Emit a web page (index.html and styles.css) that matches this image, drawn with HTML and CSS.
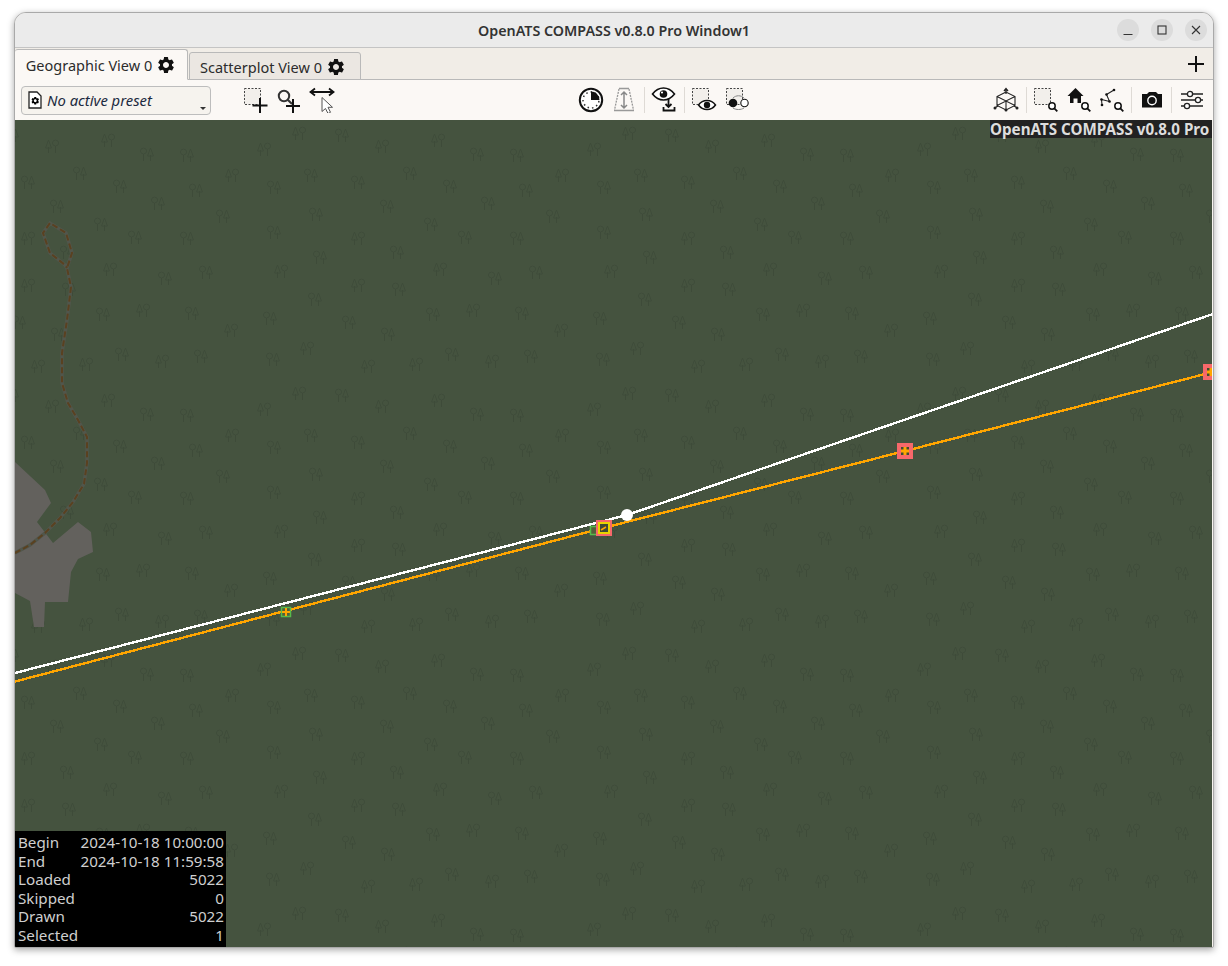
FILE: index.html
```html
<!DOCTYPE html>
<html lang="en">
<head>
  <meta charset="UTF-8">
  <title>OpenATS COMPASS v0.8.0 Pro Window1</title>
  <link rel="stylesheet" href="styles.css">
</head>
<body>
  <svg class="defs" width="0" height="0">
    <defs>
      <symbol id="gear" viewBox="0 0 24 24">
        <path d="M19.14 12.94c.04-.3.06-.61.06-.94 0-.32-.02-.64-.07-.94l2.03-1.58a.49.49 0 0 0 .12-.61l-1.92-3.32a.488.488 0 0 0-.59-.22l-2.39.96c-.5-.38-1.03-.7-1.62-.94l-.36-2.54a.484.484 0 0 0-.48-.41h-3.84c-.24 0-.43.17-.47.41l-.36 2.54c-.59.24-1.13.57-1.62.94l-2.39-.96c-.22-.08-.47 0-.59.22L2.74 8.87c-.12.21-.08.47.12.61l2.03 1.58c-.05.3-.09.63-.09.94s.02.64.07.94l-2.03 1.58a.49.49 0 0 0-.12.61l1.92 3.32c.12.22.37.29.59.22l2.39-.96c.5.38 1.03.7 1.62.94l.36 2.54c.05.24.24.41.48.41h3.84c.24 0 .44-.17.47-.41l.36-2.54c.59-.24 1.13-.56 1.62-.94l2.39.96c.22.08.47 0 .59-.22l1.92-3.32c.12-.22.07-.47-.12-.61l-2.01-1.58zM12 15.6c-1.98 0-3.6-1.62-3.6-3.6s1.62-3.6 3.6-3.6 3.6 1.62 3.6 3.6-1.62 3.6-3.6 3.6z"/>
      </symbol>
      <symbol id="mag" viewBox="0 0 10 10" overflow="visible">
        <circle cx="4" cy="4" r="3.2" fill="#fff" stroke="#111" stroke-width="1.5"/>
        <path d="M6.3 6.3 9.3 9.3" stroke="#111" stroke-width="1.8"/>
      </symbol>
      <g id="tree-a">
        <circle cx="3.5" cy="4" r="3"/>
        <path d="M3.5 7V14M10.5 8V14M10.5 1 7.5 9H13.500Z"/>
      </g>
      <g id="tree-b">
        <circle cx="10.5" cy="4" r="3"/>
        <path d="M10.5 7V14M3.5 8V14M3.5 1 .5 9H6.5Z"/>
      </g>
      <pattern id="forest" width="330" height="260" patternUnits="userSpaceOnUse" patternTransform="translate(225 5)">
        <g class="trees">
          <use href="#tree-b" x="52" y="1"/><use href="#tree-a" x="95" y="3"/><use href="#tree-b" x="135" y="14"/>
          <use href="#tree-b" x="191" y="8"/><use href="#tree-a" x="230" y="22"/><use href="#tree-a" x="270" y="23"/>
          <use href="#tree-b" x="17" y="17"/><use href="#tree-a" x="64" y="43"/><use href="#tree-a" x="111" y="50"/>
          <use href="#tree-a" x="163" y="41"/><use href="#tree-a" x="27" y="55"/><use href="#tree-a" x="203" y="54"/>
          <use href="#tree-a" x="279" y="58"/><use href="#tree-b" x="315" y="43"/><use href="#tree-a" x="69" y="82"/>
          <use href="#tree-a" x="140" y="74"/><use href="#tree-a" x="241" y="71"/><use href="#tree-a" x="306" y="84"/>
          <use href="#tree-a" x="27" y="100"/><use href="#tree-b" x="111" y="106"/><use href="#tree-a" x="184" y="92"/>
          <use href="#tree-a" x="218" y="105"/><use href="#tree-a" x="270" y="106"/><use href="#tree-a" x="73" y="125"/>
          <use href="#tree-a" x="150" y="120"/><use href="#tree-b" x="34" y="139"/><use href="#tree-b" x="193" y="137"/>
          <use href="#tree-a" x="248" y="146"/><use href="#tree-a" x="289" y="140"/><use href="#tree-b" x="111" y="153"/>
          <use href="#tree-a" x="152" y="157"/><use href="#tree-a" x="68" y="167"/><use href="#tree-a" x="23" y="186"/>
          <use href="#tree-a" x="102" y="190"/><use href="#tree-a" x="186" y="182"/><use href="#tree-b" x="226" y="178"/>
          <use href="#tree-a" x="275" y="181"/><use href="#tree-b" x="314" y="198"/><use href="#tree-a" x="141" y="202"/>
          <use href="#tree-b" x="60" y="216"/><use href="#tree-a" x="26" y="227"/><use href="#tree-a" x="205" y="222"/>
          <use href="#tree-a" x="284" y="224"/><use href="#tree-b" x="245" y="229"/><use href="#tree-b" x="169" y="232"/>
          <use href="#tree-b" x="121" y="234"/>
        </g>
      </pattern>
    </defs>
  </svg>

  <div class="window">
    <header class="titlebar">
      <span class="title">OpenATS COMPASS v0.8.0 Pro Window1</span>
      <div class="winbtns">
        <span class="winbtn"><svg width="12" height="12" viewBox="0 0 12 12"><path d="M1.5 10.5h9" stroke="#333" stroke-width="1.2"/></svg></span>
        <span class="winbtn"><svg width="12" height="12" viewBox="0 0 12 12"><rect x="2" y="2" width="8" height="8" fill="none" stroke="#333" stroke-width="1.1"/></svg></span>
        <span class="winbtn"><svg width="12" height="12" viewBox="0 0 12 12"><path d="M2 2l8 8M10 2l-8 8" stroke="#333" stroke-width="1.1"/></svg></span>
      </div>
    </header>

    <nav class="tabbar">
      <div class="tab active">Geographic View 0 <svg class="gear" width="20" height="20"><use href="#gear"/></svg></div>
      <div class="tab">Scatterplot View 0 <svg class="gear" width="20" height="20"><use href="#gear"/></svg></div>
      <svg class="addtab" width="16" height="16" viewBox="0 0 16 16"><path d="M8 0v16M0 8h16" stroke="#111" stroke-width="2"/></svg>
    </nav>

    <div class="toolbar">
      <div class="combo">
        <svg width="16" height="18" viewBox="0 0 16 18">
          <path d="M2 1h8l4 4v12H2z" fill="#fff" stroke="#222" stroke-width="1.3"/>
          <use href="#gear" x="3.5" y="5" width="9.5" height="9.5"/>
        </svg>
        <span class="combo-text">No active preset</span>
        <span class="combo-arrow"></span>
      </div>

      <div class="tools left-tools">
        <svg class="icon" viewBox="0 0 26 26">
          <rect x=".5" y="1.5" width="16" height="16" fill="#f2efeb" stroke="#444" stroke-dasharray="2 1.5"/>
          <path d="M16 11v15M8.5 18.5h15" stroke="#111" stroke-width="2"/>
        </svg>
        <svg class="icon" viewBox="0 0 26 26">
          <circle cx="7" cy="9" r="5.2" fill="none" stroke="#333" stroke-width="2"/>
          <path d="M11 13l4 4" stroke="#333" stroke-width="2.2"/>
          <path d="M16 12v14M9 19h14" stroke="#111" stroke-width="2"/>
        </svg>
        <svg class="icon" viewBox="0 0 26 26">
          <path d="M2 5h22M6 1.5 1.500 5 6 8.500M20 1.500 24.500 5 20 8.500" fill="none" stroke="#111" stroke-width="1.8"/>
          <path d="M13 10.5v14l3.5-3 2.5 5 2.5-1.2-2.500-5h4.500z" fill="#fff" stroke="#555"/>
        </svg>
      </div>

      <span class="spacer"></span>

      <div class="tools">
        <svg class="icon" viewBox="0 0 26 26">
          <circle cx="13" cy="13" r="11.2" fill="#fff" stroke="#111" stroke-width="2"/>
          <circle cx="13" cy="13" r="8" fill="none" stroke="#333" stroke-width="1.5" stroke-dasharray="1.5 3" stroke-dashoffset="-1"/>
          <path d="M13 4.5V13h8.5A8.5 8.5 0 0 0 13 4.5z" fill="#111"/>
        </svg>
        <svg class="icon" viewBox="0 0 26 26">
          <path d="M8 2 3.5 23M18 2l4.5 21" fill="none" stroke="#999" stroke-width="1.3" stroke-dasharray="2 1"/>
          <path d="M8 1.5h10M3 23.5h20" stroke="#999" stroke-width="1.5"/>
          <path d="M13 5v16M10 8l3-3 3 3M10 18l3 3 3-3" fill="none" stroke="#888" stroke-width="1.5"/>
        </svg>
        <span class="sep"></span>
        <svg class="icon" viewBox="0 0 26 26">
          <path d="M1.5 7C5 2.5 9 1 12.5 1S20 2.5 23.5 7C20 11.5 16 13 12.5 13S5 11.5 1.5 7z" fill="#fff" stroke="#111" stroke-width="1.6"/>
          <circle cx="12.5" cy="7" r="3.8" fill="#111"/>
          <circle cx="11" cy="5.5" r="1.1" fill="#fff"/>
          <path d="M17.5 12v8M14.5 17l3 3 3-3" fill="none" stroke="#111" stroke-width="1.8"/>
          <path d="M12.5 20v3.5h11V20" fill="none" stroke="#111" stroke-width="1.8"/>
        </svg>
        <span class="sep"></span>
        <svg class="icon" viewBox="0 0 26 26">
          <rect x="1.5" y="1.5" width="16" height="16" fill="#f2efeb" stroke="#444" stroke-dasharray="2 1.5"/>
          <path d="M7.5 18C10 14.5 13 13.5 16 13.5S22 14.5 24.5 18C22 21.5 19 22.5 16 22.5S10 21.5 7.5 18z" fill="#fff" stroke="#111" stroke-width="1.5"/>
          <circle cx="16" cy="18" r="3.2" fill="#111"/>
        </svg>
        <svg class="icon" viewBox="0 0 26 26">
          <rect x="2.5" y="1.5" width="16" height="16" fill="#f2efeb" stroke="#444" stroke-dasharray="2 1.5"/>
          <path d="M9 11c3-3 8-3 11 0M9 21c3 2 8 2 11 0" fill="none" stroke="#888"/>
          <circle cx="9" cy="16" r="4.3" fill="#111"/>
          <circle cx="20.5" cy="16" r="3.7" fill="#fff" stroke="#111" stroke-width="1.1"/>
        </svg>
      </div>

      <span class="spacer"></span>

      <div class="tools">
        <svg class="icon" viewBox="0 0 26 26">
          <path d="M13 5 4 9.5v9L13 23l9-4.5v-9zM4 9.5 13 14l9-4.5M13 14v9M4 18.5 13 14l9 4.5" fill="none" stroke="#222" stroke-width="1.1"/>
          <path d="M13 2v5M11 4l2-2.5L15 4M1.5 21 5 19M21 19l3.5 2" fill="none" stroke="#222" stroke-width="1.3"/>
          <circle cx="2" cy="21" r="1.5" fill="#222"/><circle cx="24" cy="21" r="1.5" fill="#222"/><circle cx="13" cy="23" r="1.5" fill="#222"/>
        </svg>
        <span class="sep"></span>
        <svg class="icon" viewBox="0 0 26 26">
          <rect x="1.5" y="1.5" width="16" height="16" fill="#f2efeb" stroke="#444" stroke-dasharray="2 1.5"/>
          <use href="#mag" x="15" y="15" width="10" height="10"/>
        </svg>
        <svg class="icon" viewBox="0 0 26 26">
          <path d="M9.5 1 1.5 9H4v7h3.5v-4.5h4V16H15V9h2.5z" fill="#111"/>
          <use href="#mag" x="15" y="15" width="10" height="10"/>
        </svg>
        <svg class="icon" viewBox="0 0 26 26">
          <path d="M3 18l-.5-5.5 8 2-3-7L15 3" fill="none" stroke="#222" stroke-width="1.1"/>
          <circle cx="3" cy="18" r="1.3" fill="#111"/><circle cx="2.5" cy="12.5" r="1.3" fill="#111"/>
          <circle cx="10.5" cy="14.5" r="1.3" fill="#111"/><circle cx="7.5" cy="7.5" r="1.3" fill="#111"/><circle cx="15" cy="3" r="1.3" fill="#111"/>
          <use href="#mag" x="15" y="15" width="10" height="10"/>
        </svg>
        <span class="sep"></span>
        <svg class="icon" viewBox="0 0 26 26">
          <path d="M3 7h5l2-2h7l2 2h4v13.5H3z" fill="#111"/>
          <circle cx="13" cy="13.5" r="4.2" fill="#111" stroke="#fff" stroke-width="1.4"/>
        </svg>
        <span class="sep"></span>
        <svg class="icon" viewBox="0 0 26 26">
          <path d="M2 7h22M2 13h22M2 19h22" stroke="#222" stroke-width="1.3"/>
          <circle cx="11" cy="7" r="2.6" fill="#fff" stroke="#222" stroke-width="1.3"/>
          <circle cx="19" cy="13" r="2.6" fill="#fff" stroke="#222" stroke-width="1.3"/>
          <circle cx="8" cy="19" r="2.6" fill="#fff" stroke="#222" stroke-width="1.3"/>
        </svg>
      </div>
    </div>

    <main class="map">
      <svg class="map-canvas" width="1198" height="827" viewBox="0 0 1198 827">
        <rect width="1198" height="827" fill="url(#forest)"/>
        <path class="land" d="M0 342 30 370 36 383 22 402 38 423 63 402 76 412 78 432 63 439 56 452 53 482 30 482 29 507 19 507 15 481 0 473Z"/>
        <path class="track-halo" d="M0 433 15 425 30 413 45 398 58 382 69 364 72 343 72 317 63 300 53 283 47 263 47 233 52 200 56 167 52 148 57 133 51 113 35 103 28 113 35 133 50 145 52 148"/>
        <path class="track" d="M0 433 15 425 30 413 45 398 58 382 69 364 72 343 72 317 63 300 53 283 47 263 47 233 52 200 56 167 52 148 57 133 51 113 35 103 28 113 35 133 50 145 52 148"/>
        <path class="line-white" d="M0 553 612 395 1198 194"/>
        <path class="line-orange" d="M0 561.500 270 491 588 408 890 331 1198 252"/>

        <rect class="mark-green" x="266.5" y="487.5" width="9" height="9"/>
        <path class="plus" d="M271 488v8M267 492h8"/>
        <rect class="mark-green" x="575.5" y="406.5" width="7" height="8"/>
        <rect class="mark-red" x="582.5" y="401.5" width="13" height="13"/>
        <rect class="mark-yellow" x="584" y="403" width="10" height="10"/>
        <path class="plus thin" d="M586 410l5-3"/>
        <rect class="mark-red thick" x="884" y="325" width="12" height="12"/>
        <path class="plus fat" d="M890 327v8M886 331h8"/>
        <rect class="mark-red thick" x="1190" y="246" width="12" height="12"/>
        <path class="plus fat" d="M1196 248v8M1192 252h8"/>
        <circle cx="612" cy="395" r="6" fill="#fff"/>
      </svg>

      <div class="watermark">OpenATS COMPASS v0.8.0 Pro</div>

      <dl class="stats">
        <dt>Begin</dt><dd>2024-10-18 10:00:00</dd>
        <dt>End</dt><dd>2024-10-18 11:59:58</dd>
        <dt>Loaded</dt><dd>5022</dd>
        <dt>Skipped</dt><dd>0</dd>
        <dt>Drawn</dt><dd>5022</dd>
        <dt>Selected</dt><dd>1</dd>
      </dl>
    </main>
  </div>
</body>
</html>
```

FILE: styles.css
```css
* {
  box-sizing: border-box;
}
html, body {
  margin: 0;
  height: 100%;
}
body {
  background: #fff;
  overflow: hidden;
  padding: 12px 14px 18px;
  font-family: "Noto Sans", sans-serif;
  font-size: 14.5px;
  color: #2c2c2c;
}
.defs {
  position: absolute;
}

.window {
  height: 936px;
  display: flex;
  flex-direction: column;
  background: #f6f3ee;
  border: 1px solid #a9a9a9;
  border-radius: 12px 12px 2px 2px;
  box-shadow: 0 2px 7px rgba(0, 0, 0, 0.35);
  overflow: hidden;
}

.titlebar {
  height: 35px;
  flex: none;
  position: relative;
  display: flex;
  align-items: center;
  justify-content: center;
  padding-top: 1px;
  background: #ebebeb;
  border-bottom: 1px solid #c4c4c4;
}
.title {
  font-weight: 600;
  font-size: 14.3px;
  color: #333;
}
.winbtns {
  position: absolute;
  right: 6px;
  top: 6px;
  display: flex;
  gap: 12px;
}
.winbtn {
  width: 22px;
  height: 22px;
  border-radius: 50%;
  background: #dcdcdc;
  display: flex;
  align-items: center;
  justify-content: center;
}

.tabbar {
  height: 32px;
  flex: none;
  display: flex;
  align-items: flex-end;
  background: #f1ede7;
  border-bottom: 1px solid #b9b9b9;
}
.tab {
  height: 28px;
  width: 172px;
  margin-left: 1px;
  margin-bottom: -1px;
  display: flex;
  align-items: center;
  justify-content: center;
  gap: 4px;
  padding-top: 1px;
  padding-right: 4px;
  background: #ebe7e2;
  border: 1px solid #b9b9b9;
  border-radius: 3px 3px 0 0;
  white-space: nowrap;
}
.tab.active {
  height: 31px;
  width: 173px;
  margin-left: 0;
  padding-right: 0;
  background: #fbf8f5;
  border-bottom-color: #fbf8f5;
  border-left: 0;
}
.gear {
  flex: none;
  fill: #111;
}
.addtab {
  margin: 0 9px 7px auto;
}

.toolbar {
  height: 40px;
  flex: none;
  display: flex;
  align-items: center;
  padding: 0 8px 0 6px;
  background: #fbf8f5;
}
.combo {
  width: 190px;
  height: 29px;
  flex: none;
  position: relative;
  display: flex;
  align-items: center;
  gap: 4px;
  padding-left: 5px;
  background: #f6f3ee;
  border: 1px solid #bdbdbd;
  border-radius: 4px;
}
.combo-text {
  font-style: italic;
  font-size: 14.8px;
  color: #1c2a40;
}
.combo-arrow {
  position: absolute;
  right: 4px;
  bottom: 4px;
  border: 3px solid transparent;
  border-top-color: #333;
  border-bottom: 0;
}
.tools {
  display: flex;
  align-items: center;
  gap: 6.6px;
}
.left-tools {
  margin-left: 33px;
}
.spacer {
  flex: 1;
}
.icon {
  width: 26px;
  height: 26px;
  flex: none;
}
.sep {
  width: 1px;
  height: 26px;
  background: #dedad5;
}

.map {
  flex: 1;
  position: relative;
  overflow: hidden;
  background: #45533f;
  margin-right: 1px;
}
.map-canvas {
  position: absolute;
  top: 0;
  left: 0;
  display: block;
}
.trees {
  fill: none;
  stroke: #3e4b39;
  stroke-width: 1;
}
.land {
  fill: #63615d;
}
.track-halo {
  fill: none;
  stroke: #51564b;
  stroke-width: 3.5;
}
.track {
  fill: none;
  stroke: #5a4120;
  stroke-width: 2;
  stroke-dasharray: 6 3;
}
.line-white {
  fill: none;
  stroke: #fff;
  stroke-width: 2.4;
  shape-rendering: crispEdges;
}
.line-orange {
  fill: none;
  stroke: #ffa500;
  stroke-width: 2.4;
  shape-rendering: crispEdges;
}
.mark-green {
  fill: #55613a;
  stroke: #58bb4b;
  stroke-width: 1.5;
}
.mark-red {
  fill: #3e4a36;
  stroke: #f7686a;
  stroke-width: 3;
}
.mark-red.thick {
  stroke-width: 4;
}
.mark-yellow {
  fill: #3e4a36;
  stroke: #e8d400;
  stroke-width: 2;
}
.plus {
  fill: none;
  stroke: #ffa500;
  stroke-width: 2;
}
.plus.thin {
  stroke-width: 1.5;
}
.plus.fat {
  stroke-width: 3;
}

.watermark {
  position: absolute;
  top: 0;
  left: 975px;
  width: 222px;
  height: 18px;
  white-space: nowrap;
  background: #222;
  color: #ddd;
  font-weight: 700;
  font-size: 15.2px;
  line-height: 18px;
}
.stats {
  position: absolute;
  left: 0;
  bottom: 0;
  width: 211px;
  height: 116px;
  margin: 0;
  padding: 2px 2px 0 3px;
  display: grid;
  grid-template-columns: auto 1fr;
  grid-auto-rows: 18.6px;
  background: #000;
  color: #cfcfcf;
  font-size: 15.2px;
  line-height: 18.6px;
}
.stats dd {
  margin: 0;
  text-align: right;
}
```
